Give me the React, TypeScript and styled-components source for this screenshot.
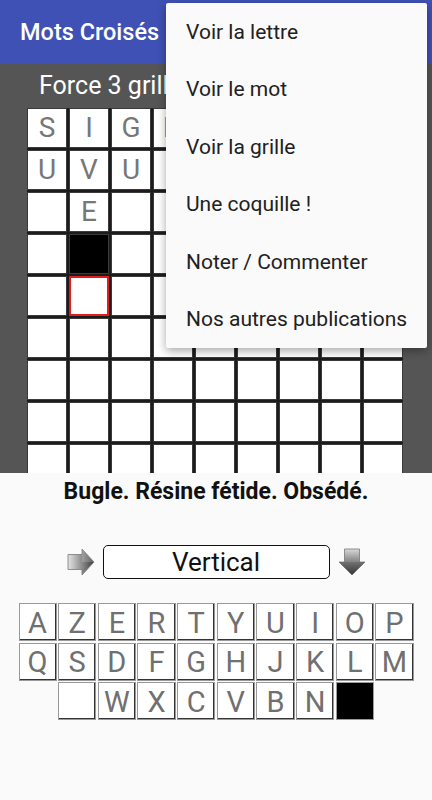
import styled, { createGlobalStyle } from "styled-components";

const GlobalStyle = createGlobalStyle`
	html, body {
		margin: 0;
		padding: 0;
		background: #fafafa;
		font-family: Roboto, "Liberation Sans", sans-serif;
	}
	* {
		box-sizing: border-box;
	}
`;

const Page = styled.div`
	position: relative;
	display: flex;
	flex-direction: column;
	width: 432px;
	height: 800px;
	overflow: hidden;
	background: #fafafa;
`;

const AppBar = styled.div`
	display: flex;
	align-items: center;
	height: 64px;
	padding-left: 20px;
	background: #3f51b5;
	color: white;
	font-size: 23.5px;
	font-weight: 500;
	flex-shrink: 0;
`;

const Board = styled.div`
	height: 409px;
	flex-shrink: 0;
	overflow: hidden;
	background: #555555;
	padding: 6px 0 0 27px;
`;

const Heading = styled.div`
	height: 38px;
	padding: 0 0 6px 12px;
	line-height: 32px;
	font-size: 25px;
	color: white;
	white-space: nowrap;
`;

const Grid = styled.div`
	display: grid;
	grid-template-columns: repeat(9, 40px);
	grid-auto-rows: 40px;
	gap: 2px;
	width: 376px;
	background: #1c1c1c;
`;

const Cell = styled.div<{ $black?: boolean; $selected?: boolean }>`
	display: flex;
	align-items: center;
	justify-content: center;
	background: ${(p) => (p.$black ? "#000" : "#fff")};
	border: ${(p) => (p.$selected ? "2px solid #e31b1b" : "1px solid #3a3a3a")};
	color: #777;
	font-size: 28px;
	line-height: 1;
`;

const Panel = styled.div`
	flex: 1;
	display: flex;
	flex-direction: column;
	align-items: center;
	padding-top: 6px;
	background: #fafafa;
`;

const Clue = styled.div`
	height: 26px;
	line-height: 26px;
	font-size: 23px;
	font-weight: 700;
	color: #111;
`;

const DirRow = styled.div`
	display: flex;
	align-items: center;
	gap: 8px;
	margin-top: 40px;
	height: 34px;
`;

const DirBox = styled.div`
	width: 227px;
	height: 34px;
	border: 1.5px solid #111;
	border-radius: 5px;
	background: #fff;
	display: flex;
	align-items: center;
	justify-content: center;
	font-size: 26px;
	color: #111;
`;

const Keyboard = styled.div`
	display: grid;
	grid-template-columns: repeat(10, 1fr);
	grid-auto-rows: 38px;
	column-gap: 1.5px;
	row-gap: 1.5px;
	width: 395px;
	margin-top: 24px;
`;

const Key = styled.div<{ $black?: boolean; $start?: number }>`
	grid-column-start: ${(p) => p.$start ?? "auto"};
	display: flex;
	align-items: center;
	justify-content: center;
	background: ${(p) => (p.$black ? "#000" : "#fff")};
	border: 1px solid #9a9a9a;
	box-shadow: ${(p) => (p.$black ? "none" : "inset -1px -1px 0 #333")};
	color: #707070;
	font-size: 29px;
	line-height: 1;
	padding-top: 2px;
`;

// popup menu lies over the toolbar and the grid
const Menu = styled.div`
	position: absolute;
	top: 3px;
	left: 166px;
	width: 261px;
	height: 345px;
	background: #fafafa;
	border-radius: 2px;
	box-shadow: 0 3px 10px rgba(0, 0, 0, 0.35);
	display: flex;
	flex-direction: column;
`;

const MenuItem = styled.div`
	height: 57.5px;
	display: flex;
	align-items: center;
	padding-left: 20px;
	font-size: 21px;
	color: #212121;
	white-space: nowrap;
`;

const rows = [
	"SIGN     ",
	"UVU      ",
	" E       ",
	" #       ",
	"         ",
	"         ",
	"         ",
	"         ",
	"         ",
];

const menuItems = [
	"Voir la lettre",
	"Voir le mot",
	"Voir la grille",
	"Une coquille !",
	"Noter / Commenter",
	"Nos autres publications",
];

const keyRows = ["AZERTYUIOP", "QSDFGHJKLM"];
const lastRow = [" ", "W", "X", "C", "V", "B", "N", "#"];

function RightArrow() {
	return (
		<svg width="28" height="28" viewBox="0 0 28 28">
			<defs>
				<linearGradient id="ra" x1="0" y1="0" x2="1" y2="0">
					<stop offset="0" stopColor="#e4e4e4" />
					<stop offset="0.55" stopColor="#8a8a8a" />
					<stop offset="1" stopColor="#3c3c3c" />
				</linearGradient>
			</defs>
			<path d="M1 6.5H15V1L27 14L15 27V21.5H1Z" fill="url(#ra)" stroke="#777" strokeWidth="0.8" />
			<path d="M15 1L27 14H15Z" fill="#fff" opacity="0.18" />
		</svg>
	);
}

function DownArrow() {
	return (
		<svg width="28" height="28" viewBox="0 0 28 28">
			<defs>
				<linearGradient id="da" x1="0" y1="0" x2="0" y2="1">
					<stop offset="0" stopColor="#d8d8d8" />
					<stop offset="0.5" stopColor="#828282" />
					<stop offset="1" stopColor="#3c3c3c" />
				</linearGradient>
			</defs>
			<path d="M6.5 1H21.5V14H27L14 27L1 14H6.5Z" fill="url(#da)" stroke="#777" strokeWidth="0.8" />
			<path d="M1 14H27L14 27Z" fill="#000" opacity="0.12" />
		</svg>
	);
}

export default function App() {
	return (
		<Page>
			<GlobalStyle />
			<AppBar>Mots Croisés</AppBar>

			<Board>
				<Heading>Force 3 grille n° 24</Heading>
				<Grid>
					{rows.map((row, r) =>
						row.split("").map((ch, c) => (
							<Cell key={`${r}-${c}`} $black={ch === "#"} $selected={r === 4 && c === 1}>
								{ch !== "#" ? ch.trim() : ""}
							</Cell>
						))
					)}
				</Grid>
			</Board>

			<Panel>
				<Clue>Bugle. Résine fétide. Obsédé.</Clue>
				<DirRow>
					<RightArrow />
					<DirBox>Vertical</DirBox>
					<DownArrow />
				</DirRow>
				<Keyboard>
					{keyRows.map((row) =>
						row.split("").map((ch) => <Key key={ch}>{ch}</Key>)
					)}
					{lastRow.map((ch, i) => (
						<Key key={`l${i}`} $start={i === 0 ? 2 : undefined} $black={ch === "#"}>
							{ch === "#" ? "" : ch.trim()}
						</Key>
					))}
				</Keyboard>
			</Panel>

			<Menu>
				{menuItems.map((item) => (
					<MenuItem key={item}>{item}</MenuItem>
				))}
			</Menu>
		</Page>
	);
}
